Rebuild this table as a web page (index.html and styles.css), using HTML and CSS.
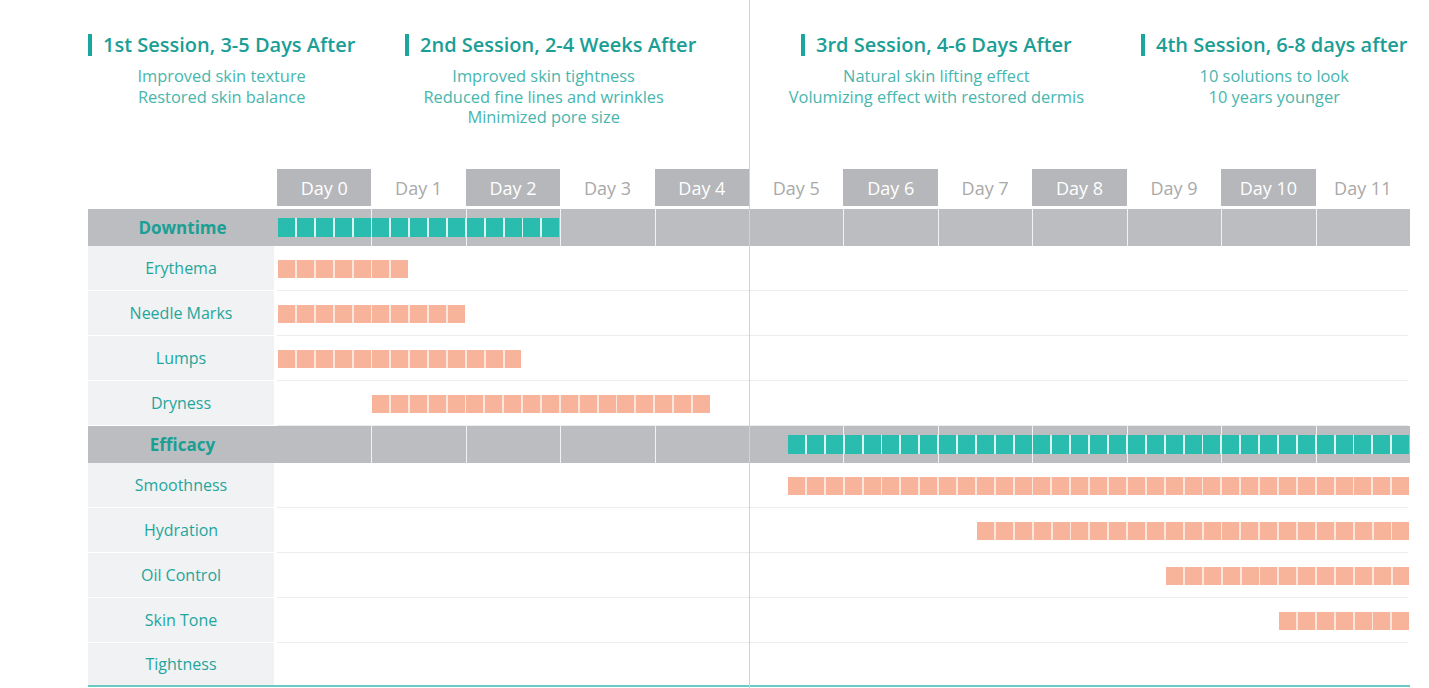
FILE: index.html
```html
<!DOCTYPE html>
<html lang="en">
<head>
<meta charset="utf-8">
<title>Treatment Timeline</title>
<link rel="stylesheet" href="styles.css">
</head>
<body>
<div class="page">
  <div class="divider-line"></div>

  <header class="sessions">
    <div class="session">
      <h2 class="session-title">1st Session, 3-5 Days After</h2>
      <p class="session-sub">Improved skin texture<br>Restored skin balance</p>
    </div>
    <div class="session">
      <h2 class="session-title">2nd Session, 2-4 Weeks After</h2>
      <p class="session-sub shift">Improved skin tightness<br>Reduced fine lines and wrinkles<br>Minimized pore size</p>
    </div>
    <div class="session">
      <h2 class="session-title">3rd Session, 4-6 Days After</h2>
      <p class="session-sub">Natural skin lifting effect<br>Volumizing effect with restored dermis</p>
    </div>
    <div class="session">
      <h2 class="session-title">4th Session, 6-8 days after</h2>
      <p class="session-sub">10 solutions to look<br>10 years younger</p>
    </div>
  </header>

  <section class="chart">
    <div class="row days">
      <div class="label"></div>
      <div class="day dark">Day 0</div>
      <div class="day">Day 1</div>
      <div class="day dark">Day 2</div>
      <div class="day">Day 3</div>
      <div class="day dark">Day 4</div>
      <div class="day">Day 5</div>
      <div class="day dark">Day 6</div>
      <div class="day">Day 7</div>
      <div class="day dark">Day 8</div>
      <div class="day">Day 9</div>
      <div class="day dark">Day 10</div>
      <div class="day">Day 11</div>
    </div>

    <div class="row category">
      <div class="label">Downtime</div>
      <div class="cells">
        <div class="cell"></div><div class="cell"></div><div class="cell"></div><div class="cell"></div><div class="cell"></div><div class="cell"></div><div class="cell"></div><div class="cell"></div><div class="cell"></div><div class="cell"></div><div class="cell"></div><div class="cell"></div>
      </div>
      <div class="bar teal" style="--s:0;--n:15"></div>
    </div>

    <div class="row item">
      <div class="label">Erythema</div>
      <div class="track"></div>
      <div class="bar salmon" style="--s:0;--n:7"></div>
    </div>
    <div class="row item">
      <div class="label">Needle Marks</div>
      <div class="track"></div>
      <div class="bar salmon" style="--s:0;--n:10"></div>
    </div>
    <div class="row item">
      <div class="label">Lumps</div>
      <div class="track"></div>
      <div class="bar salmon" style="--s:0;--n:13"></div>
    </div>
    <div class="row item">
      <div class="label">Dryness</div>
      <div class="track"></div>
      <div class="bar salmon" style="--s:5;--n:18"></div>
    </div>

    <div class="row category">
      <div class="label">Efficacy</div>
      <div class="cells">
        <div class="cell"></div><div class="cell"></div><div class="cell"></div><div class="cell"></div><div class="cell"></div><div class="cell"></div><div class="cell"></div><div class="cell"></div><div class="cell"></div><div class="cell"></div><div class="cell"></div><div class="cell"></div>
      </div>
      <div class="bar teal" style="--s:27;--n:33"></div>
    </div>

    <div class="row item">
      <div class="label">Smoothness</div>
      <div class="track"></div>
      <div class="bar salmon" style="--s:27;--n:33"></div>
    </div>
    <div class="row item">
      <div class="label">Hydration</div>
      <div class="track"></div>
      <div class="bar salmon" style="--s:37;--n:23"></div>
    </div>
    <div class="row item">
      <div class="label">Oil Control</div>
      <div class="track"></div>
      <div class="bar salmon" style="--s:47;--n:13"></div>
    </div>
    <div class="row item">
      <div class="label">Skin Tone</div>
      <div class="track"></div>
      <div class="bar salmon" style="--s:53;--n:7"></div>
    </div>
    <div class="row item last">
      <div class="label">Tightness</div>
      <div class="track"></div>
    </div>
  </section>
</div>
</body>
</html>
```

FILE: styles.css
```css
* { box-sizing: border-box; }

html, body {
  margin: 0;
  padding: 0;
  background: #ffffff;
}

body {
  font-family: "Open Sans", "Noto Sans", sans-serif;
  width: 1429px;
  height: 688px;
  overflow: hidden;
}

.page {
  position: relative;
  padding-left: 88px;
  width: 1410px;
  height: 688px;
}

.divider-line {
  position: absolute;
  left: 749px;
  top: 0;
  width: 1px;
  height: 688px;
  background: #d2d2d2;
  z-index: 5;
}

/* Sessions header */
.sessions {
  display: grid;
  grid-template-columns: 317px 396px 340px 1fr;
  height: 169px;
  padding-top: 34px;
}

.session {
  justify-self: start;
  display: flex;
  flex-direction: column;
  align-items: center;
}

.session-title {
  margin: 0;
  align-self: stretch;
  border-left: 4px solid #1aa69c;
  padding-left: 11px;
  font-size: 20px;
  line-height: 22px;
  font-weight: 600;
  color: #1b9e96;
  white-space: nowrap;
}

.session-sub {
  margin: 10px -50px 0;
  text-align: center;
  font-size: 16.4px;
  line-height: 20.5px;
  color: #47b6ae;
  white-space: nowrap;
}

.session-sub.shift {
  margin-left: -57px;
  margin-right: -43px;
}

/* Chart */
.chart {
  width: 1322px;
}

.row {
  display: grid;
  grid-template-columns: 189px repeat(12, 1fr);
  grid-template-rows: 100%;
}

.days {
  height: 37px;
  margin-bottom: 3px;
}

.day {
  display: flex;
  align-items: center;
  justify-content: center;
  font-size: 18px;
  color: #a9a9a9;
}

.day.dark {
  background: #b6b7ba;
  color: #ffffff;
}

.label {
  grid-row: 1;
  grid-column: 1;
  display: flex;
  align-items: center;
  justify-content: center;
  font-size: 16px;
  color: #1fa69c;
}

.category {
  height: 37px;
  background: #bcbdc0;
}

.category .label {
  font-size: 17px;
  font-weight: 700;
  color: #1a9f95;
}

.cells {
  grid-row: 1;
  grid-column: 2 / -1;
  display: grid;
  grid-template-columns: repeat(12, 1fr);
}

.cell {
  border-left: 1px solid #f2f2f2;
}

.cell:first-child {
  border-left: none;
}

.item {
  height: 45px;
}

.item .label {
  background: #f1f2f4;
  margin-right: 3px;
  margin-bottom: 1px;
}

.item .track {
  grid-row: 1;
  grid-column: 2 / -1;
  border-bottom: 1px solid #ececec;
  margin-right: 2px;
}

.item.last {
  height: 44px;
  border-bottom: 2px solid #6ccac4;
}

.item.last .label {
  margin-bottom: 0;
}

.item.last .track {
  border-bottom: none;
}

.bar {
  grid-row: 1;
  grid-column: 2 / -1;
  align-self: center;
  position: relative;
  z-index: 2;
  margin-left: calc(var(--s) * 18.8833px + 1px);
  width: calc(var(--n) * 18.8833px - 2px);
}

.bar.teal {
  height: 19px;
  background: repeating-linear-gradient(90deg, #2bbcb0 0 17px, #d9f5f1 17px 18.8833px);
}

.bar.salmon {
  height: 18px;
  background: repeating-linear-gradient(90deg, #f8b49a 0 17px, #fde6dc 17px 18.8833px);
}
```
